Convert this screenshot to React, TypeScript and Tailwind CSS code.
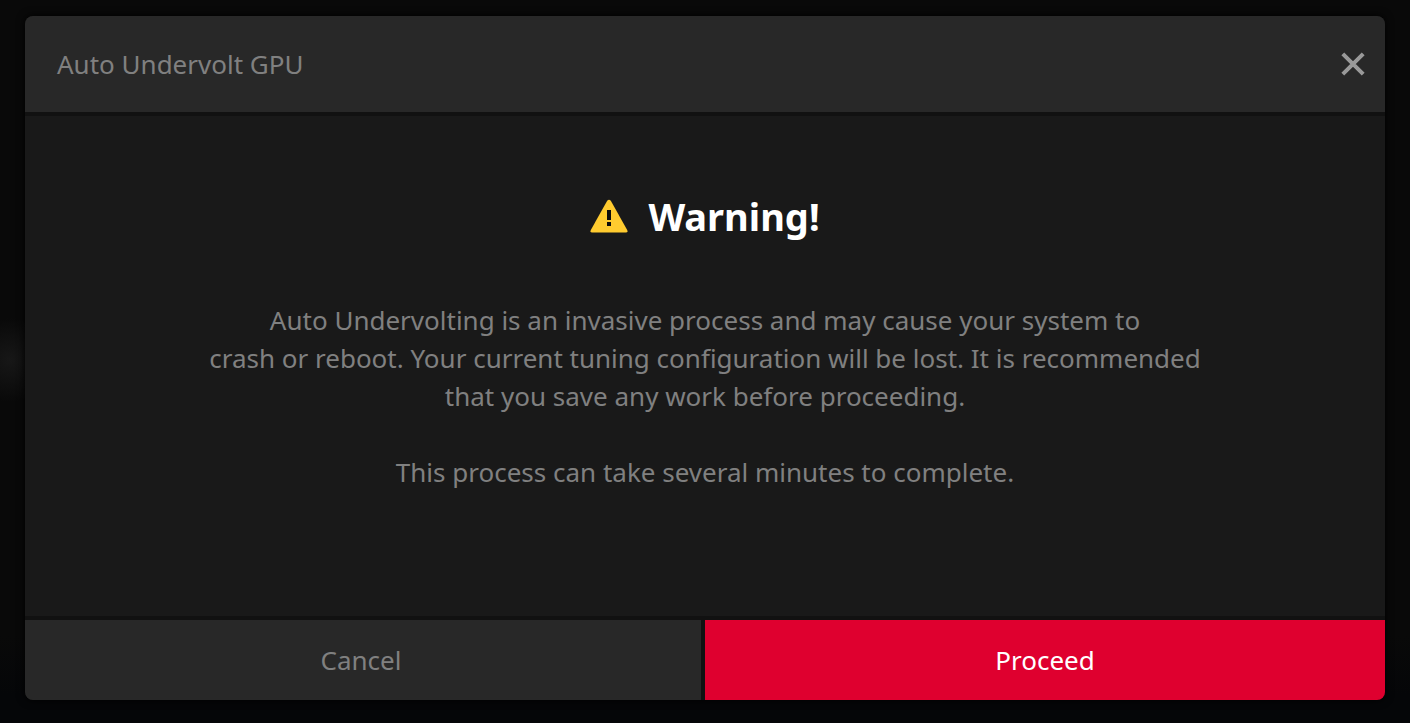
export default function App() {
  return (
    <main className="flex min-h-screen flex-col bg-[#090909] bg-[radial-gradient(circle_at_10px_360px,#171717_0px,transparent_42px),linear-gradient(#090909_88%,#050608_96%)] px-[25px] pt-4 pb-[23px] font-['Noto_Sans','Open_Sans',sans-serif]">
      <section
        role="dialog"
        aria-modal="true"
        aria-labelledby="dialog-title"
        className="flex grow flex-col gap-1 overflow-hidden rounded-lg bg-[#111111] shadow-[0_0_8px_#000000]"
      >
        <header className="flex h-24 items-center justify-between bg-[#282828] pr-5 pl-8">
          <h1 id="dialog-title" className="text-[26px] leading-[38px] text-[#808080]">
            Auto Undervolt GPU
          </h1>
          <button type="button" aria-label="Close" className="text-[#999999]">
            <svg className="size-6" viewBox="0 0 24 24" stroke="currentColor" strokeWidth="4" aria-hidden="true">
              <path d="M1.8 1.8 22.2 22.2M22.2 1.8 1.8 22.2" />
            </svg>
          </button>
        </header>

        <div className="flex grow flex-col items-center bg-[#191919] px-8 pt-[72px] text-center">
          <div className="flex items-center gap-5">
            <svg className="h-[34px] w-[38px]" viewBox="0 0 38 34" aria-hidden="true">
              <path
                d="M17.2 1.7Q19-.4 20.8 1.7L37.2 31Q38.2 33.5 35.8 33.5H2.2Q-.2 33.5 .8 31Z"
                fill="#ffcb2f"
              />
              <path d="M17 11h4v10h-4zM17 23h4v4h-4z" fill="#0c0c0c" />
            </svg>
            <h2 className="text-[38px] leading-[56px] font-bold text-white">Warning!</h2>
          </div>
          <div className="mt-[57px] text-[26px] leading-[38px] text-[#808080]">
            <p>
              Auto Undervolting is an invasive process and may cause your system to
              <br />
              crash or reboot. Your current tuning configuration will be lost. It is recommended
              <br />
              that you save any work before proceeding.
            </p>
            <p className="mt-[38px]">This process can take several minutes to complete.</p>
          </div>
        </div>

        <footer className="grid h-20 grid-cols-2 text-[26px] leading-[38px]">
          <button type="button" className="mr-1 bg-[#282828] pr-1 text-[#808080]">
            Cancel
          </button>
          <button type="button" className="bg-[#df002f] text-white">
            Proceed
          </button>
        </footer>
      </section>
    </main>
  );
}
